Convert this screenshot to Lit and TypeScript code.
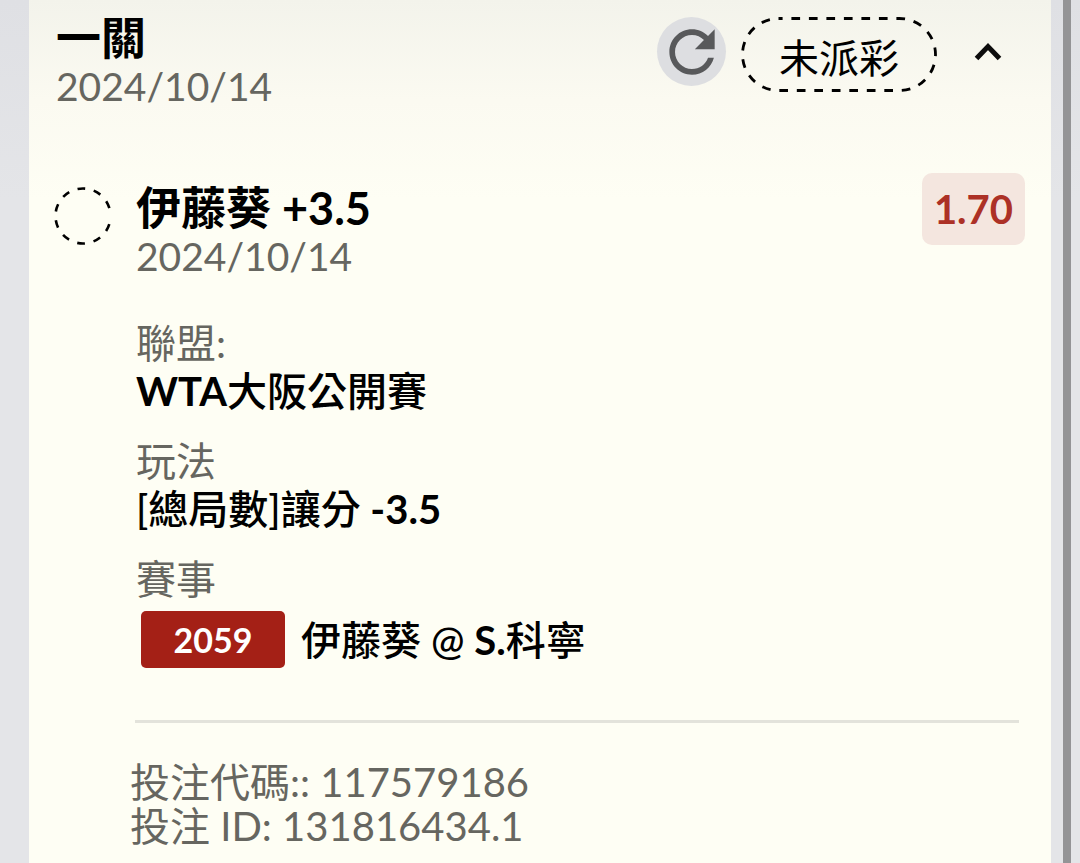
import { LitElement, html, css } from "lit";
import { customElement, property, state } from "lit/decorators.js";

const ringDashes = `${"16 18.5 ".repeat(9)}16 33.5`;

@customElement("dash-ring")
class DashRing extends LitElement {
  static styles = css`
    :host { display: block; flex: none; width: 60px; height: 60px; }
    .ring { display: block; width: 100%; height: 100%; }
  `;
  render() {
    return html`<svg class="ring" viewBox="0 0 60 60" aria-hidden="true">
      <circle cx="30" cy="30" r="27.5" fill="none" stroke="#000" stroke-width="2.6"
        pathLength="360" stroke-dasharray=${ringDashes} transform="rotate(17 30 30)"></circle>
    </svg>`;
  }
}

@customElement("bet-field")
class BetField extends LitElement {
  @property() label = "";
  static styles = css`
    :host { display: block; }
    .label { color: #666660; font-size: 40px; line-height: 48px; }
    .value { color: #000; font-size: 40px; line-height: 48px; font-weight: 500; }
  `;
  render() {
    return html`<div class="label">${this.label}</div>
      <div class="value"><slot></slot></div>`;
  }
}

@customElement("app-root")
class AppRoot extends LitElement {
  @state() open = true;

  static styles = css`
    :host {
      display: flex;
      min-height: 100vh;
      box-sizing: border-box;
      padding-left: 29px;
      background: linear-gradient(#dfe0e4, #e4e5e8 200px);
      font-family: Lato, "Noto Sans CJK TC", sans-serif;
      overflow: hidden;
    }
    .card {
      flex: 1;
      min-width: 0;
      background: linear-gradient(to bottom, #f3f3eb, #fbfaf1 100px, #fefef4 200px);
    }
    .track {
      flex: none;
      width: 8px;
      margin: 0 9px 0 12px;
      background: #949496;
    }
    .head {
      display: flex;
      align-items: flex-start;
      gap: 15px;
      padding: 15px 45px 0 27px;
    }
    .heading { flex: 1; }
    h1, h2 { margin: 0; color: #000; font-size: 45px; line-height: 47px; font-weight: 600; }
    b { font-weight: 700; }
    .date { color: #666660; font-size: 39px; line-height: 48px; }
    button {
      border: 0;
      padding: 0;
      margin: 0;
      background: none;
      font: inherit;
      color: #000;
      display: flex;
      align-items: center;
      justify-content: center;
    }
    .refresh {
      width: 69px;
      height: 69px;
      margin-top: 2px;
      border-radius: 50%;
      background: #dddee1;
    }
    .refresh svg { width: 68px; height: 68px; }
    .status {
      position: relative;
      box-sizing: border-box;
      width: 196px;
      height: 76px;
      margin-top: 1px;
      padding-top: 4px;
      font-size: 40px;
      display: flex;
      align-items: center;
      justify-content: center;
    }
    .outline { position: absolute; inset: 0; width: 100%; height: 100%; }
    .toggle { width: 36px; height: 74px; margin-left: 18px; }
    .leg {
      display: flex;
      align-items: flex-start;
      padding: 75px 26px 0 24px;
    }
    .mark { padding-top: 1px; }
    .body { flex: 1; min-width: 0; padding-left: 23px; }
    .odds {
      margin-top: -12px;
      padding: 0 12px;
      border-radius: 10px;
      background: #f4e6df;
      color: #ac3126;
      font-size: 40px;
      line-height: 72px;
      font-weight: 700;
    }
    .fields { display: grid; gap: 22px; padding-top: 39px; }
    .match { display: flex; align-items: center; gap: 16px; padding: 8px 0 0 5px; }
    .code {
      width: 144px;
      border-radius: 5px;
      background: #a42016;
      color: #fff;
      font-size: 34px;
      line-height: 57px;
      text-align: center;
      font-weight: 700;
    }
    .foot {
      margin: 52px 32px 0 106px;
      border-top: 3px solid #e3e3db;
      padding-top: 37px;
    }
    .ids { margin: 0 0 0 -5px; color: #666660; font-size: 40px; line-height: 44px; }
    .ids p { margin: 0; }
  `;

  render() {
    return html`
      <main class="card">
        <header class="head">
          <div class="heading">
            <h1>一關</h1>
            <div class="date">2024/10/14</div>
          </div>
          <button class="refresh" aria-label="重新整理">
            <svg viewBox="0 0 24 24" fill="#58595b" aria-hidden="true">
              <path d="M17.65 6.35C16.2 4.9 14.21 4 12 4c-4.42 0-7.99 3.58-7.99 8s3.57 8 7.99 8c3.73 0 6.84-2.55 7.73-6h-2.08c-.82 2.33-3.04 4-5.65 4-3.31 0-6-2.69-6-6s2.69-6 6-6c1.66 0 3.14.69 4.22 1.78L13 11h7V4l-2.35 2.35z"></path>
            </svg>
          </button>
          <div class="status">
            <svg class="outline" viewBox="0 0 196 76" aria-hidden="true">
              <rect x="1.5" y="2.5" width="193" height="72" rx="36" fill="none" stroke="#000"
                stroke-width="2.8" stroke-dasharray="8.7 8.8" stroke-dashoffset="4.6"></rect>
            </svg>
            未派彩
          </div>
          <button class="toggle" aria-label="收合" aria-expanded=${this.open}
            @click=${() => (this.open = !this.open)}>
            <svg width="36" height="36" viewBox="0 0 36 36" aria-hidden="true">
              <path d=${this.open ? "M6.5 24.5 18 12.5 29.5 24.5" : "M6.5 12 18 24 29.5 12"}
                fill="none" stroke="#0c0c0c" stroke-width="5"></path>
            </svg>
          </button>
        </header>
        ${this.open
          ? html`
              <section class="leg">
                <div class="mark"><dash-ring></dash-ring></div>
                <div class="body">
                  <h2>伊藤葵<b> +3.5</b></h2>
                  <div class="date">2024/10/14</div>
                  <div class="fields">
                    <bet-field label="聯盟:"><b>WTA</b>大阪公開賽</bet-field>
                    <bet-field label="玩法">[總局數]讓分<b> -3.5</b></bet-field>
                    <bet-field label="賽事">
                      <div class="match"><span class="code">2059</span><span>伊藤葵 @<b> S.</b>科寧</span></div>
                    </bet-field>
                  </div>
                </div>
                <div class="odds">1.70</div>
              </section>
              <footer class="foot">
                <div class="ids">
                  <p>投注代碼:: 117579186</p>
                  <p>投注 ID: 131816434.1</p>
                </div>
              </footer>
            `
          : null}
      </main>
      <div class="track"></div>
    `;
  }
}
